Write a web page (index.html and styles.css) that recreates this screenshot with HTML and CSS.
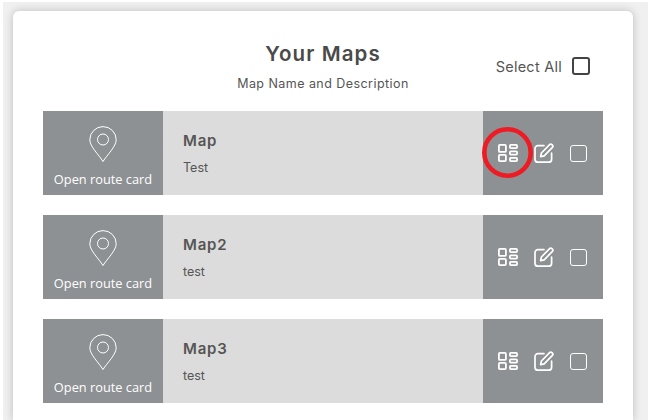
FILE: index.html
```html
<!DOCTYPE html>
<html lang="en">
  <head>
    <meta charset="UTF-8" />
    <meta name="viewport" content="width=device-width, initial-scale=1" />
    <title>Your Maps</title>
    <link rel="stylesheet" href="styles.css">
  </head>
  <body>
    <svg width="0" height="0" class="defs">
      <symbol id="pin" viewBox="0 0 28 36">
        <path d="M14 35.500C10 29 .8 20.500 .8 13.800a13.200 13.200 0 0 1 26.400 0C27.200 20.500 18 29 14 35.500z" fill="none" stroke="#fff" stroke-width="1" stroke-linejoin="round" />
        <circle cx="14" cy="13.500" r="5.500" fill="none" stroke="#fff" stroke-width="1" />
      </symbol>
      <symbol id="list" viewBox="0 0 20 18">
        <g fill="none" stroke="#fff" stroke-width="1.8">
          <rect x="0.9" y="0.9" width="7" height="7" rx="1" />
          <rect x="0.9" y="10.9" width="7" height="6.2" rx="1" />
          <rect x="11.9" y="0.9" width="7.2" height="3.2" rx="1" />
          <rect x="11.9" y="7.4" width="7.2" height="3.2" rx="1" />
          <rect x="11.9" y="13.9" width="7.2" height="3.2" rx="1" />
        </g>
      </symbol>
      <symbol id="edit" viewBox="0 0 20 20">
        <g fill="none" stroke="#fff" stroke-width="1.7" stroke-linejoin="round" stroke-linecap="round">
          <path d="M10 2.600H4a3 3 0 0 0-3 3v10.600a3 3 0 0 0 3 3h10.600a3 3 0 0 0 3-3V10" />
          <path d="M6.600 13.600l.8-3.600L15.600 1.600a1.600 1.600 0 0 1 2.300 0l.5.5a1.600 1.600 0 0 1 0 2.300L10.200 12.800z" />
        </g>
      </symbol>
    </svg>

    <main class="card">
      <header class="card-head">
        <div></div>
        <div class="titles">
          <h1>Your Maps</h1>
          <p class="subtitle">Map Name and Description</p>
        </div>
        <label class="select-all">Select All <span class="checkbox dark"></span></label>
      </header>

      <section class="map-row">
        <a class="route-link">
          <svg class="pin"><use href="#pin" /></svg>
          <span>Open route card</span>
        </a>
        <div class="map-info">
          <h2>Map</h2>
          <p>Test</p>
        </div>
        <div class="map-actions">
          <svg class="icon-list"><use href="#list" /></svg>
          <svg class="icon-edit"><use href="#edit" /></svg>
          <span class="checkbox"></span>
        </div>
        <svg class="highlight" viewBox="0 0 51 51">
          <circle cx="25.500" cy="25.500" r="23.200" fill="none" stroke="#ed1c24" stroke-width="4.600" />
        </svg>
      </section>

      <section class="map-row">
        <a class="route-link">
          <svg class="pin"><use href="#pin" /></svg>
          <span>Open route card</span>
        </a>
        <div class="map-info">
          <h2>Map2</h2>
          <p>test</p>
        </div>
        <div class="map-actions">
          <svg class="icon-list"><use href="#list" /></svg>
          <svg class="icon-edit"><use href="#edit" /></svg>
          <span class="checkbox"></span>
        </div>
      </section>

      <section class="map-row">
        <a class="route-link">
          <svg class="pin"><use href="#pin" /></svg>
          <span>Open route card</span>
        </a>
        <div class="map-info">
          <h2>Map3</h2>
          <p>test</p>
        </div>
        <div class="map-actions">
          <svg class="icon-list"><use href="#list" /></svg>
          <svg class="icon-edit"><use href="#edit" /></svg>
          <span class="checkbox"></span>
        </div>
      </section>
    </main>
  </body>
</html>
```

FILE: styles.css
```css
* {
  box-sizing: border-box;
  margin: 0;
  padding: 0;
}

html,
body {
  height: 420px;
  overflow: hidden;
}

body {
  font-family: 'Inter', 'Open Sans', sans-serif;
  background-color: #f0f0f0;
  color: #555;
  border-top: 2px solid #fff;
  border-left: 3px solid #fff;
  padding: 9px 15px 0 10px;
}

.defs {
  position: absolute;
}

.card {
  background-color: #fff;
  border-radius: 6px 6px 0 0;
  box-shadow: 0 0 8px rgba(0, 0, 0, 0.22);
  padding: 0 30px;
  height: 409px;
  overflow: hidden;
}

.card-head {
  display: grid;
  grid-template-columns: 1fr auto 1fr;
  height: 100px;
}

.titles {
  text-align: center;
  padding-top: 30px;
}

h1 {
  font-size: 20.5px;
  line-height: 26px;
  font-weight: 600;
  letter-spacing: 1.1px;
  color: #4a4a4a;
}

.subtitle {
  font-size: 12.5px;
  line-height: 16px;
  margin-top: 9px;
  letter-spacing: 0.45px;
}

.select-all {
  display: flex;
  align-items: center;
  justify-content: flex-end;
  gap: 10px;
  height: 18px;
  margin-top: 46px;
  margin-right: 13px;
  font-size: 14.5px;
  letter-spacing: 0.25px;
}

.checkbox {
  display: block;
  width: 17px;
  height: 17px;
  border: 1.8px solid #fff;
  border-radius: 3px;
}

.checkbox.dark {
  width: 18px;
  height: 18px;
  border: 2px solid #444;
}

.map-row {
  position: relative;
  display: flex;
  height: 84px;
  margin-bottom: 20px;
  background-color: #dcdcdc;
}

.route-link {
  width: 120px;
  background-color: #8e9193;
  color: #fff;
  font-family: 'Open Sans', sans-serif;
  font-size: 12.8px;
  line-height: 18px;
  text-align: center;
  padding-top: 15px;
}

.pin {
  display: block;
  width: 28px;
  height: 36px;
  margin: 0 auto 8px;
}

.map-info {
  flex: 1;
  padding: 20px 20px 0;
}

h2 {
  font-size: 15px;
  line-height: 20px;
  font-weight: 600;
  letter-spacing: 0.8px;
}

.map-info p {
  font-size: 12.5px;
  line-height: 16px;
  margin-top: 9px;
}

.map-actions {
  width: 120px;
  background-color: #8e9193;
  display: flex;
  align-items: center;
  padding-left: 15px;
}

.icon-list {
  width: 20px;
  height: 18px;
}

.icon-edit {
  width: 20px;
  height: 20px;
  margin-left: 16px;
}

.map-actions .checkbox {
  margin-left: 16px;
}

.highlight {
  position: absolute;
  left: 439px;
  top: 16px;
  width: 51px;
  height: 51px;
}
```
